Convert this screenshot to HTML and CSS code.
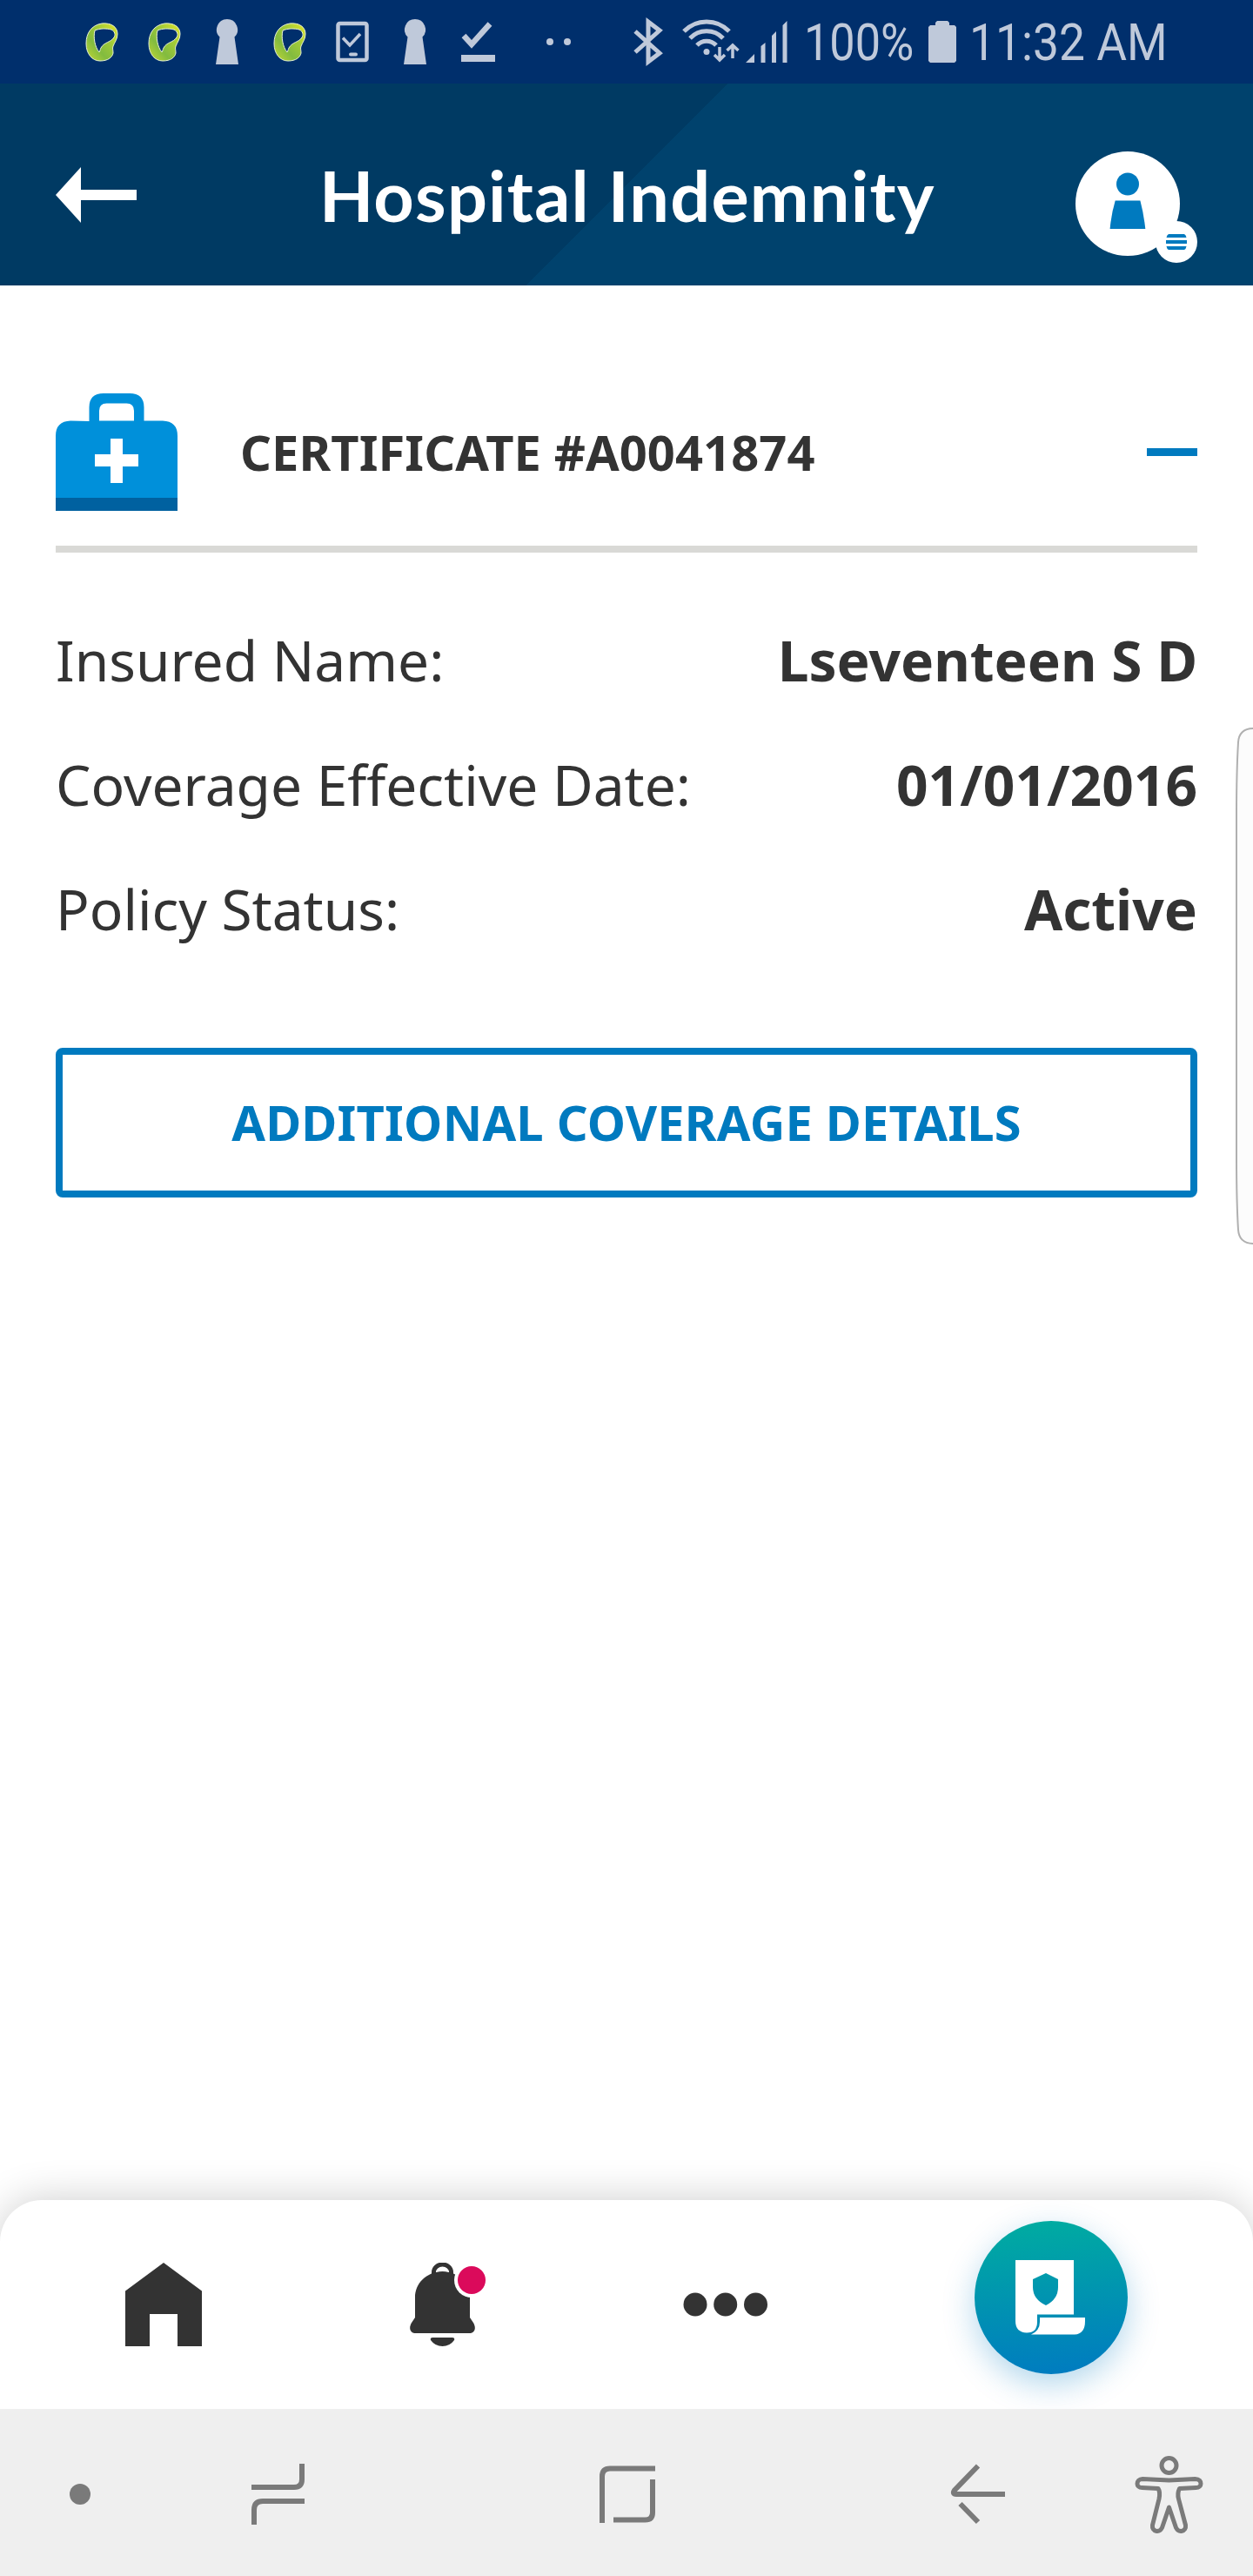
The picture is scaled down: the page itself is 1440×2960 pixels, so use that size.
FILE: index.html
```html
<!DOCTYPE html>
<html lang="en">
<head>
<meta charset="utf-8">
<title>Hospital Indemnity</title>
<link rel="stylesheet" href="styles.css">
</head>
<body>
<svg class="defs" width="0" height="0">
  <defs>
    <linearGradient id="leaf" x1="0" y1="1" x2="1" y2="0"><stop offset="0" stop-color="#c6d935"/><stop offset=".35" stop-color="#82bb3f"/><stop offset=".65" stop-color="#a3cb38"/><stop offset="1" stop-color="#e3e62a"/></linearGradient>
    <symbol id="loop" viewBox="0 0 72 96"><path fill="url(#leaf)" stroke="#e9f3d5" stroke-width="1" fill-rule="evenodd" d="M36 27C24 29 18 38 18 50c0 12 7 20 16 20 9 0 14-4 15-9 0-4-1-5 0-8 2-5 5-8 5-14C54 31 47 26 36 27zM28 35c6-2.500 13-2.500 19-1 4 2 5 6 3 9-4 6-11 5-15 12-1 2-1 4-2 5-5-6-7-17-5-25z"/></symbol>
    <symbol id="keyhole" viewBox="0 0 72 96"><path fill="#bfc9da" d="M36 22a12 12 0 0 1 8.500 20.500L49 74H23l4.500-31.500A12 12 0 0 1 36 22z"/></symbol>
  </defs>
</svg>
<div class="phone">
  <div class="status">
    <div class="notices">
      <svg><use href="#loop"/></svg>
      <svg><use href="#loop"/></svg>
      <svg><use href="#keyhole"/></svg>
      <svg><use href="#loop"/></svg>
      <svg viewBox="0 0 72 96" fill="none" stroke="#bfc9da"><rect x="19.500" y="27" width="33" height="42" rx="2" stroke-width="4.500"/><path d="M25 43.500l8 8.500 12-13" stroke-width="3.500"/><path d="M34 62.500h6" stroke-width="4" stroke-linecap="round"/></svg>
      <svg><use href="#keyhole"/></svg>
      <svg viewBox="0 0 72 96"><path d="M20 41l9 10 21-23.500" fill="none" stroke="#bfc9da" stroke-width="6.500"/><path fill="#bfc9da" d="M17 63h39v8H17z"/></svg>
      <svg class="more" viewBox="0 0 72 96" fill="#bfc9da"><circle cx="26" cy="48" r="4"/><circle cx="46" cy="48" r="4"/></svg>
    </div>
    <svg class="radio" viewBox="728 0 180 96" fill="none" stroke="#bfc9da">
      <path d="M730 36l28 25-13 10V25l13 10-28 25" stroke-width="5"/>
      <path d="M786 36a36 36 0 0 1 52 0M793 44a26 26 0 0 1 38 0M801 52a15 15 0 0 1 22 0" stroke-width="5"/>
      <circle cx="812" cy="59.500" r="3.500" fill="#bfc9da" stroke="none"/>
      <path d="M827 54v15M821 63l6 6 6-6M842 67V52M835.500 58l6.500-6 6.500 6" stroke-width="3.500"/>
      <path fill="#bfc9da" stroke="none" d="M857 72l10-10v10zM874.500 53l5-4v23h-5zM887 41l5-5v36h-5zM899.500 29l5-5v48h-5z"/>
    </svg>
    <span class="reading percent">100%</span>
    <svg class="battery" viewBox="0 0 32 48"><path fill="#bfc9da" d="M8 5V2l2-2h12l2 2v3h6l2 2v39l-2 2H2l-2-2V7l2-2z"/></svg>
    <span class="reading clock">11:32 AM</span>
  </div>

  <header class="header">
    <svg class="back" viewBox="0 0 93 64"><path fill="#fff" d="M0 32L29 0v26h64v12H29v26z"/></svg>
    <h1 class="title">Hospital Indemnity</h1>
    <svg class="avatar" viewBox="0 0 140 128">
      <circle cx="60" cy="60" r="60" fill="#fff"/><circle cx="60" cy="37.500" r="13" fill="#007abf"/>
      <path fill="#007abf" d="M45.700 56.500h28.700q4 15 5.900 32.500H39.600q1.600-17.500 6.100-32.500z"/>
      <circle cx="116" cy="104" r="24" fill="#fff"/>
      <path fill="#007abf" d="M107 95h18q2 1 2.500 4h-23q.5-3 2.500-4zM104 102h24v4h-24zM104.500 109h23q-.5 3-2.500 4h-18q-2-1-2.500-4z"/>
    </svg>
  </header>

  <main class="content">
    <div class="certificate">
      <svg class="kit" viewBox="0 0 140 135"><path fill="#0090da" fill-rule="evenodd" d="M38.500 32V16Q38.500 0 55 0h30q16.500 0 16.500 16v15.500H123Q140 32 140 49v71H0V49Q0 32 17 31.500zM50 31.500h40V20q0-8.500-8.500-8.500h-23Q50 11.500 50 20z"/><path fill="#0061a0" d="M0 120h140v15H0z"/><path fill="#fff" d="M63 52h14v18h18v14H77v19H63V84H45V70h18z"/></svg>
      <h2 class="number">CERTIFICATE #A0041874</h2>
      <span class="collapse"></span>
    </div>
    <dl class="facts">
      <div class="fact"><dt>Insured Name:</dt><dd>Lseventeen S D</dd></div>
      <div class="fact"><dt>Coverage Effective Date:</dt><dd>01/01/2016</dd></div>
      <div class="fact"><dt>Policy Status:</dt><dd>Active</dd></div>
    </dl>
    <button class="details">ADDITIONAL COVERAGE DETAILS</button>
  </main>

  <svg class="edge" viewBox="0 0 20 594"><path d="M21 1Q4 1 3 17Q1 50 1 100V494Q1 545 3 577Q4 593 21 593" fill="#fcfcfc" stroke="#b0b0b0" stroke-width="2"/></svg>

  <nav class="tabs">
    <svg class="home" viewBox="0 0 88 96"><path fill="#333" d="M44 0l44 32.500V96H60V59H28v37H0V32.500z"/></svg>
    <svg class="bell" viewBox="0 0 90 96">
      <path d="M27.500 15V11a10 9 0 0 1 20 0v4" fill="none" stroke="#333" stroke-width="5"/>
      <path fill="#333" d="M37.500 10C18 11 6 24 6 40v23L2 69c-4 7-1 12 5 12h61c6 0 9-5 5-12l-4-6V40C69 24 57 11 37.500 10zM26 86h23q3 0 2 3-5 7-13.500 7T24 89q-1-3 2-3z"/>
      <circle cx="71" cy="20" r="20" fill="#fff"/><circle cx="71" cy="20" r="16" fill="#db0a5b"/>
    </svg>
    <svg class="dots" viewBox="0 0 98 28" fill="#333"><circle cx="14" cy="14" r="13.500"/><circle cx="48.700" cy="14" r="13.500"/><circle cx="83.500" cy="14" r="13.500"/></svg>
    <div class="policy"><svg viewBox="0 0 80 86"><path fill="#fff" fill-rule="evenodd" d="M0 0h67v62.500H25V71q0 12.500-12 12.500Q0 83 0 70zM35 15L20 22v9q0 14 15 21 14-7 14-21v-9z"/><path fill="#fff" d="M28 66h52v4q0 15-12 15.500H18Q28 81 28 71z"/></svg></div>
  </nav>

  <div class="system">
    <svg viewBox="0 2768 1440 192" fill="none" stroke="#7a7a7a" stroke-width="6">
      <circle cx="92" cy="2866" r="12" fill="#7a7a7a" stroke="none"/>
      <path d="M347 2831v18q0 9-9 9h-49M350 2874h-48q-10 0-10 10v17"/>
      <path d="M753 2836.500h-52q-9 0-9 9V2899M750 2849v38q0 8.500-8.500 8.500H705"/>
      <path d="M1124 2833.500l-27 28q-3 4.500 2 4.500h56M1103.500 2877l20.500 21"/>
      <g stroke-width="5" stroke-linejoin="round"><circle cx="1343.500" cy="2833" r="8.500"/><path d="M1343.500 2850l30-1.500c5 0 6.500 3 6.500 5.500s-2 4.500-5.500 4.500l-19 1c-2.500 5-2 8-1 12l8 30c1 8-8 9-11 3l-8-23.500-8 23.500c-3 6-12 5-11-3l7.500-30c1-5 1-9-1-12l-18.500-1c-3.500 0-5.500-2-5.500-4.500s2-5.500 6-5.500z"/></g>
    </svg>
  </div>
</div>
</body>
</html>
```
FILE: styles.css
```css
* { box-sizing: border-box; }
body { margin: 0; background: #fff; color: #333; font-family: "Noto Sans", sans-serif; }
svg { display: block; flex: none; }
.defs { position: absolute; }
.phone { position: relative; width: 1440px; height: 2960px; display: flex; flex-direction: column; overflow: hidden; background: #fff; }

.status { height: 96px; flex: none; display: flex; align-items: center; background: #002f6c; color: #bfc9da; }
.notices { display: flex; width: 728px; padding-left: 81px; }
.notices svg { width: 72px; height: 96px; }
.notices .more { margin-left: 21px; }
.radio { width: 180px; height: 96px; }
.reading { flex: none; font: 60px/96px Roboto, sans-serif; white-space: nowrap; transform-origin: left center; }
.percent { width: 139px; margin-left: 16px; padding-top: 2px; transform: scaleX(.87); }
.battery { width: 32px; height: 48px; margin-left: 4px; }
.clock { width: 240px; margin-left: 15px; padding-top: 2px; transform: scaleX(.89); }

.header { height: 232px; flex: none; display: flex; align-items: flex-start; padding: 78px 64px 0; background: linear-gradient(135deg, #003a63 0 50%, #00426d 50%); }
.back { width: 93px; height: 64px; margin-top: 18px; }
.title { width: 720px; margin: 2px 0 0 210px; font: 700 81px/96px Lato, sans-serif; letter-spacing: 1.2px; color: #fff; white-space: nowrap; }
.avatar { width: 140px; height: 128px; margin-left: auto; }

.content { flex: 1; padding: 124px 64px 0; }
.certificate { height: 183px; display: flex; align-items: flex-start; border-bottom: 8px solid #d9d9d6; }
.kit { width: 140px; height: 135px; }
.number { margin: 29px 0 0 72px; font-size: 56px; line-height: 76px; letter-spacing: .08px; white-space: nowrap; }
.collapse { width: 58px; height: 9px; margin: 63px 0 0 auto; background: #007abf; }
.facts { margin: 52px 0 0; }
.fact { height: 143px; display: flex; justify-content: space-between; font-size: 64px; line-height: 143px; white-space: nowrap; }
.fact dd { margin: 0; font-weight: 700; }
.details { display: block; width: 100%; height: 172px; margin-top: 88px; padding: 0 0 2px; border: 8px solid #007abf; border-radius: 8px; background: #fff; color: #007abf; font: 700 56px/76px "Noto Sans", sans-serif; letter-spacing: .22px; }
.edge { position: absolute; right: 0; top: 836px; width: 20px; height: 594px; }

.tabs { height: 240px; flex: none; display: flex; align-items: flex-start; padding: 24px 144px 0; border-radius: 48px 48px 0 0; background: #fff; box-shadow: 0 0 48px rgba(0,0,0,.2); }
.home { width: 88px; height: 96px; margin-top: 48px; }
.bell { width: 90px; height: 96px; margin: 48px 0 0 239px; }
.dots { width: 98px; height: 28px; margin: 82px 0 0 224px; }
.policy { width: 176px; height: 176px; margin-left: auto; padding: 45px 0 0 47px; border-radius: 50%; background: linear-gradient(175deg, #00ada0, #007ac1); box-shadow: 0 12px 36px rgba(0,122,191,.3); }
.policy svg { width: 80px; height: 86px; }

.system { position: relative; height: 192px; flex: none; background: #efefef; }
.system svg { width: 1440px; height: 192px; }
```
